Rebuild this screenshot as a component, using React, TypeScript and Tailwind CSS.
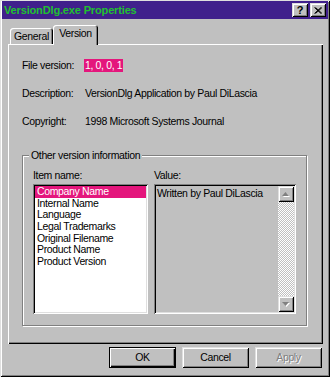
const items = [
  'Company Name',
  'Internal Name',
  'Language',
  'Legal Trademarks',
  'Original Filename',
  'Product Name',
  'Product Version',
];

const raised =
  'shadow-[inset_1px_1px_#dfdfdf,inset_-1px_-1px_#000,inset_2px_2px_#fff,inset_-2px_-2px_#808080]';
const sunken =
  'shadow-[inset_1px_1px_#808080,inset_-1px_-1px_#fff,inset_2px_2px_#000,inset_-2px_-2px_#dfdfdf]';

function Arrow({ down }: { down?: boolean }) {
  const pts = down ? '0,0 7,0 3.5,4' : '3.5,0 7,4 0,4';
  return (
    <svg width="8" height="5" viewBox="0 0 8 5">
      <polygon points={pts} fill="#fff" transform="translate(1,1)" />
      <polygon points={pts} fill="#808080" />
    </svg>
  );
}

function Button({ label, primary, disabled }: { label: string; primary?: boolean; disabled?: boolean }) {
  return (
    <div
      className={`w-[67px] h-[21px] flex items-center justify-center bg-[#c0c0c0] ${
        primary
          ? 'border border-black shadow-[inset_1px_1px_#fff,inset_-1px_-1px_#000,inset_-2px_-2px_#808080]'
          : raised
      } ${disabled ? 'text-[#808080] [text-shadow:1px_1px_0_#fff]' : 'text-black'}`}
    >
      {label}
    </div>
  );
}

export default function App() {
  return (
    <div className="w-[330px] h-[377px] bg-[#c0c0c0] flex flex-col pt-[1px] px-[2px] font-['Liberation_Sans',Arial,sans-serif] text-[10.5px] tracking-[-0.35px] text-black leading-[13px] shadow-[inset_1px_1px_#dfdfdf,inset_-1px_-1px_#000,inset_2px_2px_#fff,inset_-2px_-2px_#808080]">
      {/* title bar */}
      <div className="h-[18px] bg-[#40208c] flex items-center justify-between pl-[2px] pr-[2px]">
        <span className="text-[11px] font-bold text-[#20c030] tracking-[-0.15px]">VersionDlg.exe Properties</span>
        <div className="flex gap-[2px]">
          <div className={`w-[16px] h-[14px] bg-[#c0c0c0] flex items-center justify-center text-[11px] font-bold ${raised}`}>
            ?
          </div>
          <div className={`w-[16px] h-[14px] bg-[#c0c0c0] flex items-center justify-center ${raised}`}>
            <svg width="8" height="7" viewBox="0 0 8 7">
              <path d="M0.5 0.5 L7 6.5 M1.5 0.5 L8 6.5 M7 0.5 L0.5 6.5 M8 0.5 L1.5 6.5" stroke="#000" strokeWidth="1" />
            </svg>
          </div>
        </div>
      </div>

      {/* tabs */}
      <div className="h-[25px] flex items-end pl-[6px]">
        <div className="ml-[2px] w-[43px] h-[16px] rounded-t-[3px] bg-[#c0c0c0] flex items-center justify-center shadow-[inset_1px_1px_#fff,inset_-1px_0_#000,inset_-2px_0_#808080]">
          General
        </div>
        <div className="relative z-10 -mb-[1px] w-[45px] h-[20px] rounded-t-[3px] bg-[#c0c0c0] flex items-start pt-[2px] justify-center shadow-[inset_1px_1px_#fff,inset_-1px_0_#000,inset_-2px_0_#808080]">
          Version
        </div>
      </div>

      {/* panel */}
      <div className="ml-[6px] w-[315px] h-[300px] flex flex-col pl-[14px] shadow-[inset_1px_1px_#fff,inset_-1px_-1px_#000,inset_-2px_-2px_#808080]">
        <div className="mt-[15px] h-[13px] flex items-center">
          <span className="w-[62px]">File version:</span>
          <span className="bg-[#e4167c] text-white px-[1px]">1, 0, 0, 1</span>
        </div>
        <div className="mt-[15px] h-[13px] flex items-center">
          <span className="w-[62px]">Description:</span>
          <span className="pl-[1px]">VersionDlg Application by Paul DiLascia</span>
        </div>
        <div className="mt-[15px] h-[13px] flex items-center">
          <span className="w-[62px]">Copyright:</span>
          <span className="pl-[1px]">1998 Microsoft Systems Journal</span>
        </div>

        <div className="relative mt-[27px] w-[285px] h-[171px] border border-[#808080] shadow-[inset_1px_1px_#fff,1px_1px_#fff] pt-[13px] pl-[10px] flex gap-[6px]">
          <span className="absolute left-[6px] -top-[7px] px-[2px] bg-[#c0c0c0]">Other version information</span>

          <div className="flex flex-col">
            <div className="h-[13px]">Item name:</div>
            <div className={`mt-[2px] w-[115px] h-[130px] bg-white p-[2px] ${sunken}`}>
              {items.map((it, i) => (
                <div
                  key={it}
                  className={`h-[11.7px] leading-[11.7px] pl-[2px] ${i === 0 ? 'bg-[#e4167c] text-white' : ''}`}
                >
                  {it}
                </div>
              ))}
            </div>
          </div>

          <div className="flex flex-col">
            <div className="h-[13px]">Value:</div>
            <div className={`mt-[2px] w-[142px] h-[130px] bg-[#c0c0c0] p-[2px] flex ${sunken}`}>
              <div className="flex-1 pl-[1px] pt-[1px] leading-[12px]">Written by Paul DiLascia</div>
              <div className="w-[16px] flex flex-col bg-[repeating-conic-gradient(#c0c0c0_0%_25%,#ffffff_0%_50%)] bg-size-[2px_2px]">
                <div className={`h-[16px] bg-[#c0c0c0] flex items-center justify-center ${raised}`}>
                  <Arrow />
                </div>
                <div className="flex-1" />
                <div className={`h-[16px] bg-[#c0c0c0] flex items-center justify-center ${raised}`}>
                  <Arrow down />
                </div>
              </div>
            </div>
          </div>
        </div>
      </div>

      {/* buttons */}
      <div className="ml-[6px] w-[315px] mt-[3px] pr-[1px] flex justify-end gap-[6px]">
        <Button label="OK" primary />
        <Button label="Cancel" />
        <Button label="Apply" disabled />
      </div>
    </div>
  );
}
